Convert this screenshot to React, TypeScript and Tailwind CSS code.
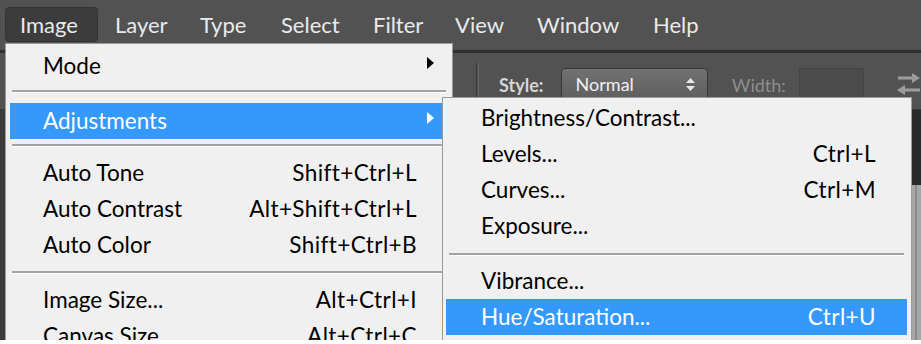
import React from 'react';

type MenuItem = {
  label?: string;
  shortcut?: string;
  arrow?: boolean;
  active?: boolean;
  sep?: string;
};

const menuFont = "font-['Lato',sans-serif]";

const topMenus = [
  { label: 'Image', cls: 'w-[93px] pl-[14px] bg-[#3c3c3c] rounded-[4px] border border-[#333]' },
  { label: 'Layer', cls: 'w-[85px] pl-[17px]' },
  { label: 'Type', cls: 'w-[81px] pl-[17px]' },
  { label: 'Select', cls: 'w-[92px] pl-[17px]' },
  { label: 'Filter', cls: 'w-[82px] pl-[17px]' },
  { label: 'View', cls: 'w-[82px] pl-[17px]' },
  { label: 'Window', cls: 'w-[116px] pl-[17px]' },
  { label: 'Help', cls: 'w-[84px] pl-[17px]' },
];

const imageMenu: MenuItem[] = [
  { label: 'Mode', arrow: true },
  { sep: 'mt-[6px] mb-[10px]' },
  { label: 'Adjustments', arrow: true, active: true },
  { sep: 'mt-[5px] mb-[8px]' },
  { label: 'Auto Tone', shortcut: 'Shift+Ctrl+L' },
  { label: 'Auto Contrast', shortcut: 'Alt+Shift+Ctrl+L' },
  { label: 'Auto Color', shortcut: 'Shift+Ctrl+B' },
  { sep: 'mt-[8px] mb-[8px]' },
  { label: 'Image Size...', shortcut: 'Alt+Ctrl+I' },
  { label: 'Canvas Size...', shortcut: 'Alt+Ctrl+C' },
];

const adjustMenu: MenuItem[] = [
  { label: 'Brightness/Contrast...' },
  { label: 'Levels...', shortcut: 'Ctrl+L' },
  { label: 'Curves...', shortcut: 'Ctrl+M' },
  { label: 'Exposure...' },
  { sep: 'mt-[9px] mb-[7px]' },
  { label: 'Vibrance...' },
  { label: 'Hue/Saturation...', shortcut: 'Ctrl+U', active: true },
];

const Arrow = ({ white }: { white?: boolean }) => (
  <span
    className={`block w-0 h-0 border-y-[6px] border-y-transparent border-l-[7px] ${
      white ? 'border-l-white' : 'border-l-black'
    }`}
  />
);

const Separator = ({ cls, inset }: { cls: string; inset: string }) => (
  <div className={`${cls} ${inset} border-t-2 border-t-[#a3a3a3] border-b border-b-white`} />
);

const Row = ({ item, pad }: { item: MenuItem; pad: string }) => (
  <div
    className={`h-[36px] flex items-center justify-between ${pad} ${
      item.active ? 'bg-[#3598fb] text-white' : 'text-black'
    }`}
  >
    <span>{item.label}</span>
    {item.shortcut && <span className="tracking-[0.4px]">{item.shortcut}</span>}
    {item.arrow && (
      <span className="-mr-[17px] mb-[6px]">
        <Arrow white={item.active} />
      </span>
    )}
  </div>
);

const UpDown = () => (
  <svg width="9" height="13" viewBox="0 0 9 13">
    <path d="M4.5 0 L9 5 H0 Z" fill="#e8e8e8" />
    <path d="M0 8 H9 L4.5 13 Z" fill="#e8e8e8" />
  </svg>
);

const SwapIcon = () => (
  <svg width="26" height="24" viewBox="0 0 26 24">
    <path d="M3 5 H19" stroke="#9c9c9c" strokeWidth="3" />
    <path d="M17 0 L25 5 L17 10 Z" fill="#9c9c9c" />
    <path d="M9 17 H25" stroke="#9c9c9c" strokeWidth="3" />
    <path d="M10 12 L2 17 L10 22 Z" fill="#9c9c9c" />
  </svg>
);

export default function App() {
  return (
    <div className={`w-[921px] h-[344px] flex flex-col bg-white overflow-hidden ${menuFont}`}>
      <div className="relative h-[340px] flex flex-col bg-[#525252] overflow-hidden">
        {/* Menu bar */}
        <div className="h-[50px] flex items-start pt-[7px] pl-[5px] text-[22px] text-[#e8eaec]">
          {topMenus.map((m) => (
            <div key={m.label} className={`h-[35px] flex items-center ${m.cls}`}>
              {m.label}
            </div>
          ))}
        </div>
        <div className="h-[3px] bg-[#2f2f2f]" />

        {/* Options bar */}
        <div className="h-[57px] flex items-start pt-[15px] pl-[476px] border-b border-[#3a3a3a]">
          <div className="w-[3px] h-[40px] mt-[-5px] border-l border-l-[#3a3a3a] border-r border-r-[#666]" />
          <span className="ml-[20px] w-[62px] mt-[4px] text-[18px] font-bold text-[#d6d6d6]">Style:</span>
          <div className="w-[148px] h-[32px] flex items-center justify-between pl-[14px] pr-[12px] rounded-[4px] border border-[#363636] bg-gradient-to-b from-[#727272] to-[#5e5e5e] text-[18px] text-[#f0f0f0]">
            <span>Normal</span>
            <UpDown />
          </div>
          <span className="ml-[24px] w-[68px] mt-[4px] text-[18px] text-[#8e8e8e]">Width:</span>
          <div className="w-[65px] h-[31px] bg-[#4b4b4b] border border-[#454545]" />
          <div className="ml-[31px] mt-[5px]">
            <SwapIcon />
          </div>
        </div>

        {/* Workspace */}
        <div className="flex-1 flex bg-[#3b3b3b]">
          <div className="ml-auto w-[9px] flex flex-col">
            <div className="h-[75px] bg-[#2a2a2a]" />
            <div className="flex-1 flex bg-[#a7a7a7]">
              <div className="ml-[3px] w-[2px] bg-[#8a8a8a]" />
            </div>
          </div>
        </div>

        {/* Image menu */}
        <div className="absolute left-[5px] top-[43px] w-[448px] h-[320px] bg-[#f0f0f0] border border-[#9a9a9a] pt-[4px] pl-[4px] pr-[10px] text-[22.5px]">
          {imageMenu.map((item, i) =>
            item.sep ? (
              <Separator key={i} cls={item.sep} inset="mx-[2px] mr-[-4px]" />
            ) : (
              <Row key={i} item={item} pad="pl-[33px] pr-[25px]" />
            )
          )}
        </div>

        {/* Adjustments submenu */}
        <div className="absolute left-[442px] top-[97px] w-[470px] h-[260px] bg-[#f0f0f0] border border-[#9a9a9a] pt-[2px] pl-[3px] pr-[4px] text-[22.5px]">
          {adjustMenu.map((item, i) =>
            item.sep ? (
              <Separator key={i} cls={item.sep} inset="mx-[3px]" />
            ) : (
              <Row key={i} item={item} pad="pl-[35px] pr-[31px]" />
            )
          )}
        </div>
      </div>
      <div className="h-[4px] bg-white" />
    </div>
  );
}
